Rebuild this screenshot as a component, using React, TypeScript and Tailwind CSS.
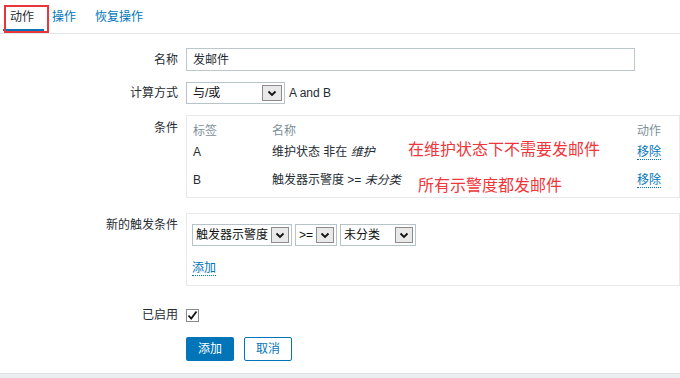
import React from "react";

const Chevron = () => (
  <svg width="10" height="7" viewBox="0 0 10 7">
    <polyline points="1.5,1.5 5,5 8.5,1.5" fill="none" stroke="#111" strokeWidth="1.8" />
  </svg>
);

const FakeSelect = ({ label, width, arrowGap = 0 }: { label: string; width: string; arrowGap?: number }) => (
  <div className={`flex h-[22px] ${width} items-center border border-[#b7c3c9] bg-white`}>
    <span className="pl-[3px] leading-[16px] whitespace-nowrap text-[#111]">{label}</span>
    <div
      className="ml-auto mr-[2px] flex h-[16px] w-[18px] items-center justify-center border border-[#8c8c8c] bg-[#e9e9e9]"
      style={{ marginLeft: arrowGap ? arrowGap : undefined }}
    >
      <Chevron />
    </div>
  </div>
);

const Label = ({ children, className = "" }: { children: React.ReactNode; className?: string }) => (
  <div className={`w-[178px] shrink-0 text-right leading-[16px] text-[#1f2c33] ${className}`}>{children}</div>
);

const LinkText = ({ children }: { children: React.ReactNode }) => (
  <span className="border-b border-dotted border-[#0275b8] leading-[16px] text-[#0275b8]">{children}</span>
);

export default function App() {
  return (
    <div className="relative flex h-[378px] w-[680px] flex-col overflow-hidden bg-white font-['Liberation_Sans','Noto_Sans_CJK_SC',sans-serif] text-[12px] text-[#1f2c33]">
      {/* tabs */}
      <div className="relative h-[34px] shrink-0 border-b border-[#e3e7ea]">
        <div className="flex pl-[10px] pt-[9px] leading-[16px]">
          <span className="text-[#1f2c33]">动作</span>
          <span className="ml-[18px] text-[#0275b8]">操作</span>
          <span className="ml-[19px] text-[#0275b8]">恢复操作</span>
        </div>
        <div className="absolute left-[3px] top-[29px] h-[2px] w-[41px] bg-[#0275b8]" />
        <div className="absolute left-[4px] top-[5px] h-[28px] w-[45px] border-2 border-[#e8363b]" />
      </div>

      {/* 名称 */}
      <div className="mt-[14px] flex items-center">
        <Label>名称</Label>
        <div className="ml-2 flex h-[23px] w-[449px] items-center border border-[#bcc7cc] pl-[6px]">发邮件</div>
      </div>

      {/* 计算方式 */}
      <div className="mt-[11px] flex items-center">
        <Label>计算方式</Label>
        <div className="ml-2 flex h-[22px] w-[99px] items-center border border-[#b7c3c9]">
          <span className="pl-[6px] text-[#111]">与/或</span>
          <div className="ml-auto mr-[2px] flex h-[16px] w-[20px] items-center justify-center border border-[#8c8c8c] bg-[#e9e9e9]">
            <Chevron />
          </div>
        </div>
        <span className="ml-[4px]">A and B</span>
      </div>

      {/* 条件 */}
      <div className="mt-[11px] flex items-start">
        <Label className="pt-[5px]">条件</Label>
        <div className="relative ml-2 h-[83px] w-[500px] border border-[#e6e9eb] pl-[6px]">
          <div className="mt-[7px] grid grid-cols-[79px_365px_1fr] leading-[16px] text-[#7b8f99]">
            <span>标签</span>
            <span>名称</span>
            <span>动作</span>
          </div>
          <div className="mt-[5px] grid grid-cols-[79px_365px_1fr] leading-[16px]">
            <span>A</span>
            <span>
              维护状态 非在 <i>维护</i>
            </span>
            <span>
              <LinkText>移除</LinkText>
            </span>
          </div>
          <div className="mt-[12px] grid grid-cols-[79px_365px_1fr] leading-[16px]">
            <span>B</span>
            <span>
              触发器示警度 &gt;= <i>未分类</i>
            </span>
            <span>
              <LinkText>移除</LinkText>
            </span>
          </div>
          <div className="absolute left-[221px] top-[24px] text-[16px] leading-[20px] text-[#f0353b]">在维护状态下不需要发邮件</div>
          <div className="absolute left-[231px] top-[60px] text-[16px] leading-[20px] text-[#f0353b]">所有示警度都发邮件</div>
        </div>
      </div>

      {/* 新的触发条件 */}
      <div className="mt-[15px] flex items-start">
        <Label className="pt-[4px]">新的触发条件</Label>
        <div className="ml-2 h-[73px] w-[500px] border border-[#e6e9eb] pl-[5px] pt-[10px]">
          <div className="flex gap-[3px]">
            <FakeSelect label="触发器示警度" width="w-[100px]" />
            <FakeSelect label=">=" width="w-[42px]" />
            <FakeSelect label="未分类" width="w-[76px]" />
          </div>
          <div className="mt-[13px]">
            <LinkText>添加</LinkText>
          </div>
        </div>
      </div>

      {/* 已启用 */}
      <div className="mt-[21px] flex items-center">
        <Label>已启用</Label>
        <div className="ml-2 flex h-[13px] w-[13px] items-center justify-center border border-[#8a8a8a] bg-white">
          <svg width="11" height="11" viewBox="0 0 11 11">
            <polyline points="1.5,5.5 4.2,8.5 9.5,1.5" fill="none" stroke="#111" strokeWidth="1.8" />
          </svg>
        </div>
      </div>

      {/* buttons */}
      <div className="mt-[14px] flex">
        <div className="w-[178px] shrink-0" />
        <div className="ml-2 flex gap-[10px]">
          <button className="h-[24px] w-[48px] rounded-[2px] bg-[#0275b8] text-[12px] text-white">添加</button>
          <button className="h-[24px] w-[48px] rounded-[2px] border border-[#0275b8] bg-white text-[12px] text-[#0275b8]">取消</button>
        </div>
      </div>

      <div className="mt-auto h-[5px] border-t border-[#dde2e5] bg-[#ebeef0]" />
    </div>
  );
}
